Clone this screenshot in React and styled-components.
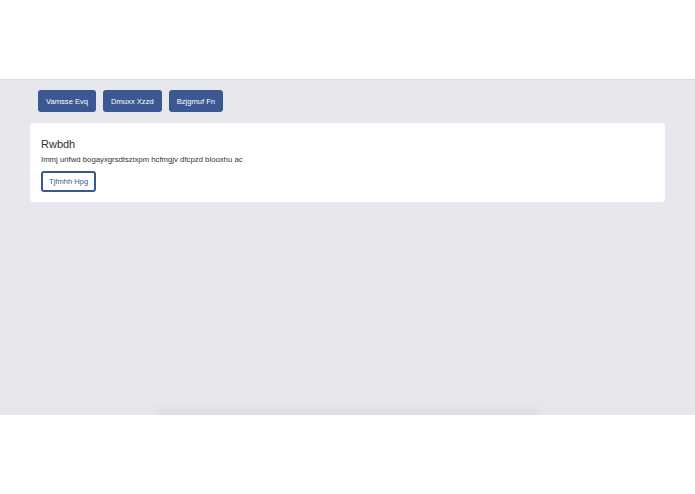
import React from "react";
import styled, { createGlobalStyle } from "styled-components";

const Global = createGlobalStyle`
  html, body { margin: 0; padding: 0; background: #ffffff; }
  body { font-family: "Liberation Sans", Arial, Helvetica, sans-serif; }
  * { box-sizing: border-box; }
`;

const Header = styled.header`
  height: 80px;
  background: #ffffff;
  border-bottom: 1px solid #d9dadf;
`;

const Main = styled.main`
  position: relative;
  height: 335px;
  background: #e7e8ed;
  padding: 10px 30px 0;
  display: flex;
  flex-direction: column;
  gap: 11px;
  overflow: hidden;
`;

const Toolbar = styled.div`
  display: flex;
  gap: 7px;
  padding-left: 8px;
`;

const Button = styled.button`
  height: ${(p) => (p.$outline ? "21px" : "22px")};
  padding: 0 ${(p) => (p.$outline ? "6px" : "8px")};
  border-radius: 3px;
  font-family: inherit;
  font-size: 7.6px;
  cursor: pointer;
  background: ${(p) => (p.$outline ? "#ffffff" : "#3c5892")};
  color: ${(p) => (p.$outline ? "#3c5892" : "#ffffff")};
  border: ${(p) => (p.$outline ? "2px solid #3c5892" : "none")};
`;

const Card = styled.section`
  background: #ffffff;
  border-radius: 4px;
  padding: 15px 11px 10px;
  display: flex;
  flex-direction: column;
  align-items: flex-start;
`;

const Title = styled.h2`
  margin: 0 0 5px;
  font-size: 11px;
  font-weight: normal;
  color: #2f2f33;
`;

const Text = styled.p`
  margin: 0 0 7px;
  font-size: 7.75px;
  color: #333338;
`;

const Glow = styled.div`
  position: absolute;
  left: 155px;
  bottom: -6px;
  width: 385px;
  height: 14px;
  background: rgba(60, 64, 90, 0.05);
  filter: blur(5px);
`;

const Footer = styled.footer`
  height: 79px;
  background: #ffffff;
`;

export default function App() {
  return (
    <>
      <Global />
      <Header />
      <Main>
        <Toolbar>
          <Button>Vamsse Evq</Button>
          <Button>Dmuxx Xzzd</Button>
          <Button>Bzjgmuf Fn</Button>
        </Toolbar>
        <Card>
          <Title>Rwbdh</Title>
          <Text>Immj urifwd bogayxgrsdtszixpm hcfmgjv dfcpzd blooxhu ac</Text>
          <Button $outline>Tjfmhh Hpg</Button>
        </Card>
        <Glow />
      </Main>
      <Footer />
    </>
  );
}
